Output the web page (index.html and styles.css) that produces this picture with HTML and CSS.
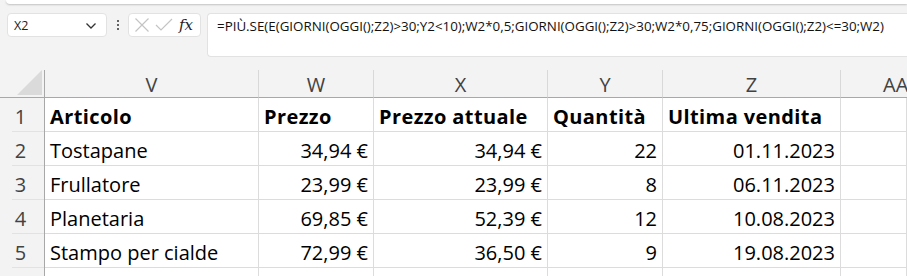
FILE: index.html
```html
<!DOCTYPE html>
<html lang="it">
<head>
<meta charset="utf-8">
<link rel="stylesheet" href="styles.css">
</head>
<body>
<div class="app">
  <div class="ribbon-edge"></div>
  <div class="fbar">
    <div class="namebox">
      <span class="name">X2</span>
      <svg class="chev" width="12" height="8" viewBox="0 0 12 8"><path d="M1.5 1.5 L6 6 L10.5 1.5" fill="none" stroke="#333" stroke-width="1.3"/></svg>
    </div>
    <div class="dots"><span></span><span></span><span></span></div>
    <div class="fxbox">
      <svg width="18" height="18" viewBox="0 0 18 18"><path d="M2.5 2.5 L15.5 15.5 M15.5 2.5 L2.5 15.5" stroke="#c4c4c4" stroke-width="1.2" fill="none"/></svg>
      <svg width="20" height="18" viewBox="0 0 20 18"><path d="M2 9 L7 14 L18 3" stroke="#c4c4c4" stroke-width="1.2" fill="none"/></svg>
      <span class="fx">fx</span>
    </div>
    <div class="formula">=PIÙ.SE(E(GIORNI(OGGI();Z2)&gt;30;Y2&lt;10);W2*0,5;GIORNI(OGGI();Z2)&gt;30;W2*0,75;GIORNI(OGGI();Z2)&lt;=30;W2)</div>
  </div>
  <div class="sheet">
    <div class="hdr corner"><div class="tri"></div></div>
    <div class="hdr col">V</div>
    <div class="hdr col">W</div>
    <div class="hdr col">X</div>
    <div class="hdr col">Y</div>
    <div class="hdr col">Z</div>
    <div class="hdr col last">AA</div>

    <div class="rh">1</div>
    <div class="c b">Articolo</div>
    <div class="c b">Prezzo</div>
    <div class="c b">Prezzo attuale</div>
    <div class="c b">Quantità</div>
    <div class="c b">Ultima vendita</div>
    <div class="c"></div>

    <div class="rh">2</div>
    <div class="c">Tostapane</div>
    <div class="c r">34,94 €</div>
    <div class="c r">34,94 €</div>
    <div class="c r">22</div>
    <div class="c r">01.11.2023</div>
    <div class="c"></div>

    <div class="rh">3</div>
    <div class="c">Frullatore</div>
    <div class="c r">23,99 €</div>
    <div class="c r">23,99 €</div>
    <div class="c r">8</div>
    <div class="c r">06.11.2023</div>
    <div class="c"></div>

    <div class="rh">4</div>
    <div class="c">Planetaria</div>
    <div class="c r">69,85 €</div>
    <div class="c r">52,39 €</div>
    <div class="c r">12</div>
    <div class="c r">10.08.2023</div>
    <div class="c"></div>

    <div class="rh">5</div>
    <div class="c">Stampo per cialde</div>
    <div class="c r">72,99 €</div>
    <div class="c r">36,50 €</div>
    <div class="c r">9</div>
    <div class="c r">19.08.2023</div>
    <div class="c"></div>

    <div class="rh"></div>
    <div class="c"></div>
    <div class="c"></div>
    <div class="c"></div>
    <div class="c"></div>
    <div class="c"></div>
    <div class="c"></div>
  </div>
</div>
</body>
</html>
```

FILE: styles.css
```css
html, body {
  margin: 0;
  padding: 0;
  background: #f3f3f3;
  overflow: hidden;
}
.app {
  width: 907px;
  height: 276px;
  overflow: hidden;
  font-family: "Open Sans", "Noto Sans", sans-serif;
}
.ribbon-edge {
  height: 4px;
  margin: 0 0 0 6px;
  background: #fff;
  border-radius: 0 0 0 6px;
  box-shadow: 0 1px 2px rgba(0,0,0,0.2);
}
.fbar {
  display: flex;
  align-items: flex-start;
  padding: 9px 0 0 7px;
  height: 57px;
  box-sizing: border-box;
}
.namebox {
  width: 100px;
  height: 24px;
  box-sizing: border-box;
  background: #fff;
  border: 1px solid #e2e2e2;
  border-radius: 4px;
  display: flex;
  align-items: center;
  justify-content: space-between;
  padding: 0 9px 0 6px;
  font-size: 12.5px;
  color: #222;
}
.chev { margin-top: 1px; }
.dots {
  width: 21px;
  height: 24px;
  display: flex;
  flex-direction: column;
  align-items: center;
  justify-content: center;
  gap: 2px;
}
.dots span {
  width: 2px;
  height: 2px;
  background: #333;
  border-radius: 1px;
}
.fxbox {
  width: 73px;
  height: 24px;
  box-sizing: border-box;
  background: #fff;
  border: 1px solid #e2e2e2;
  border-radius: 4px;
  display: flex;
  align-items: center;
  padding: 0 4px 0 4px;
  gap: 3px;
}
.fx {
  font-family: "DejaVu Serif", "Liberation Serif", serif;
  font-style: italic;
  font-size: 15px;
  color: #222;
  margin-left: 2px;
}
.formula {
  flex: 1;
  margin-left: 6px;
  height: 44px;
  box-sizing: border-box;
  background: #fff;
  border: 1px solid #e2e2e2;
  border-right: none;
  border-radius: 4px 0 0 4px;
  padding: 3px 0 0 9px;
  font-size: 13.35px;
  color: #111;
  white-space: nowrap;
  overflow: hidden;
}
.sheet {
  margin-top: 9px;
  display: grid;
  grid-template-columns: 45px 214px 115px 174px 115px 178px 66px;
  grid-template-rows: 28px repeat(5, 34px) 34px;
}
.hdr {
  background: #f3f3f3;
  border-bottom: 1px solid #a8a8a8;
  box-sizing: border-box;
}
.corner {
  border-right: 1px solid #a8a8a8;
  position: relative;
}
.tri {
  position: absolute;
  left: 17px;
  top: 0;
  width: 25px;
  height: 25px;
  background: #dadada;
  clip-path: polygon(100% 0, 100% 100%, 0 100%);
}
.col {
  border-right: 1px solid #d8d8d8;
  text-align: center;
  font-size: 20px;
  padding-top: 3px;
  line-height: 24px;
  color: #424242;
}
.col.last {
  border-right: none;
  text-align: left;
  padding-left: 42px;
  white-space: nowrap;
}
.rh {
  background: #f3f3f3;
  border-right: 1px solid #a8a8a8;
  box-sizing: border-box;
  font-size: 20px;
  padding-top: 5px;
  line-height: 28px;
  color: #424242;
  text-align: center;
  padding-right: 3px;
  position: relative;
}
.rh::after {
  content: "";
  position: absolute;
  left: 12px;
  right: 0;
  bottom: 0;
  height: 1px;
  background: #e2e2e2;
}
.c {
  background: #fff;
  border-right: 1px solid #dcdcdc;
  border-bottom: 1px solid #dcdcdc;
  box-sizing: border-box;
  font-size: 20px;
  padding: 5px 5px 0;
  line-height: 28px;
  color: #000;
  white-space: nowrap;
  overflow: hidden;
}
.c.b { font-weight: 700; letter-spacing: 0.4px; }
.c.r { text-align: right; }
```
